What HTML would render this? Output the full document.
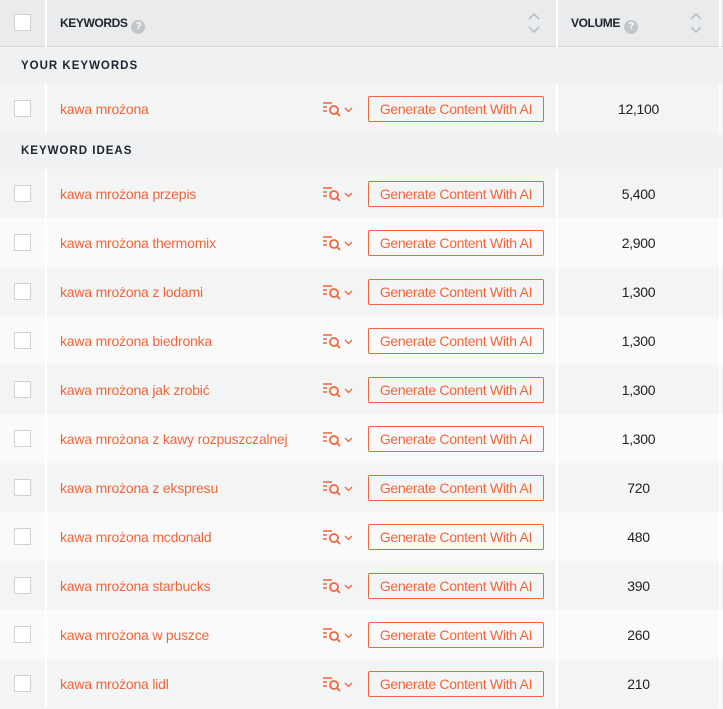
<!DOCTYPE html>
<html><head><meta charset="utf-8"><style>
*{margin:0;padding:0;box-sizing:border-box}
body{width:723px;height:707px;overflow:hidden;background:#f3f4f4;font-family:"Liberation Sans",sans-serif;position:relative}
.abs{position:absolute}
.hdr{left:0;top:0;width:723px;height:47px;background:#e9ebec;border-bottom:1px solid #d3d6d8}
.cb{position:absolute;left:14px;width:17px;height:17px;background:#fff;border:1px solid #cfd2d4}
.h{font-weight:bold;font-size:12px;color:#1d2330;letter-spacing:-0.4px}
.q{display:inline-block;width:14px;height:14px;border-radius:50%;background:#c3c6c9;color:#fff;font-size:10px;text-align:center;line-height:14px;vertical-align:-2px;margin-left:4px}
.sec{left:0;width:723px;height:36px;background:#f0f1f2;font-size:11.5px;font-weight:bold;letter-spacing:1px;color:#1d2330;padding-left:21px;line-height:36px}
.row{left:0;width:723px;height:49px}
.kw{position:absolute;left:60px;font-size:14px;color:#f0653a;line-height:49px;top:1px;letter-spacing:-0.2px}
.btn{position:absolute;left:368px;top:12px;width:176px;height:26px;border:1px solid #f0653a;border-radius:2px;color:#f0653a;font-size:14px;text-align:center;line-height:25px;letter-spacing:-0.3px}
.vol{position:absolute;left:557px;width:163px;text-align:center;font-size:14px;color:#222;line-height:49px;top:1px;letter-spacing:-0.3px}
.ic{position:absolute;left:322px;top:17px}
.vl{position:absolute;top:0;width:2px;height:707px;background:#fff}
</style></head><body>
<div class="abs hdr"></div>
<div class="abs" style="left:14px;top:14px;width:17px;height:17px;background:#fff;border:1px solid #cfd2d4"></div>
<div class="abs h" style="left:60px;top:16px">KEYWORDS<span class="q">?</span></div>
<div class="abs h" style="left:571px;top:16px">VOLUME<span class="q">?</span></div>
<svg class="abs" style="left:527px;top:12px" width="14" height="22"><path d="M2 7l5-5 5 5M2 15l5 5 5-5" fill="none" stroke="#b8bec2" stroke-width="1.6"/></svg>
<svg class="abs" style="left:689px;top:12px" width="14" height="22"><path d="M2 7l5-5 5 5M2 15l5 5 5-5" fill="none" stroke="#b8bec2" stroke-width="1.6"/></svg>
<div class="abs sec" style="top:48px">YOUR KEYWORDS</div>
<div class="abs sec" style="top:133px">KEYWORD IDEAS</div>
<div id="rows"></div>
<div class="vl" style="left:45px;top:0;height:48px"></div>
<div class="vl" style="left:556px;top:0;height:48px"></div>
<div class="vl" style="left:719px;top:0;height:48px"></div>
<script>
var d=[["kawa mrożona","12,100",84,"#f3f4f4"]];
var k=[["przepis","5,400"],["thermomix","2,900"],["z lodami","1,300"],["biedronka","1,300"],["jak zrobić","1,300"],["z kawy rozpuszczalnej","1,300"],["z ekspresu","720"],["mcdonald","480"],["starbucks","390"],["w puszce","260"],["lidl","210"]];
k.forEach(function(x,i){d.push(["kawa mrożona "+x[0],x[1],169+49*i,i%2?"#fafafa":"#f3f4f4"])});
var h="";
d.forEach(function(r){
h+='<div class="abs row" style="top:'+r[2]+'px;background:'+r[3]+'">'+
'<div class="cb" style="top:16px"></div>'+
'<div class="kw">'+r[0]+'</div>'+
'<svg class="ic" width="34" height="16"><path d="M1 2h9M1 6h4M1 10h4" stroke="#f0653a" stroke-width="1.6"/><circle cx="12" cy="9" r="4" fill="none" stroke="#f0653a" stroke-width="1.8"/><path d="M15 12l3 3" stroke="#f0653a" stroke-width="1.8"/><path d="M23 7l3.5 3.5 3.5-3.5" fill="none" stroke="#f0653a" stroke-width="1.3"/></svg>'+
'<div class="btn">Generate Content With AI</div>'+
'<div class="vol">'+r[1]+'</div>'+
'<div class="vl" style="left:45px;height:49px"></div><div class="vl" style="left:556px;height:49px"></div><div class="vl" style="left:719px;height:49px"></div>'+
'</div>';});
document.getElementById("rows").innerHTML=h;
</script>
</body></html>
